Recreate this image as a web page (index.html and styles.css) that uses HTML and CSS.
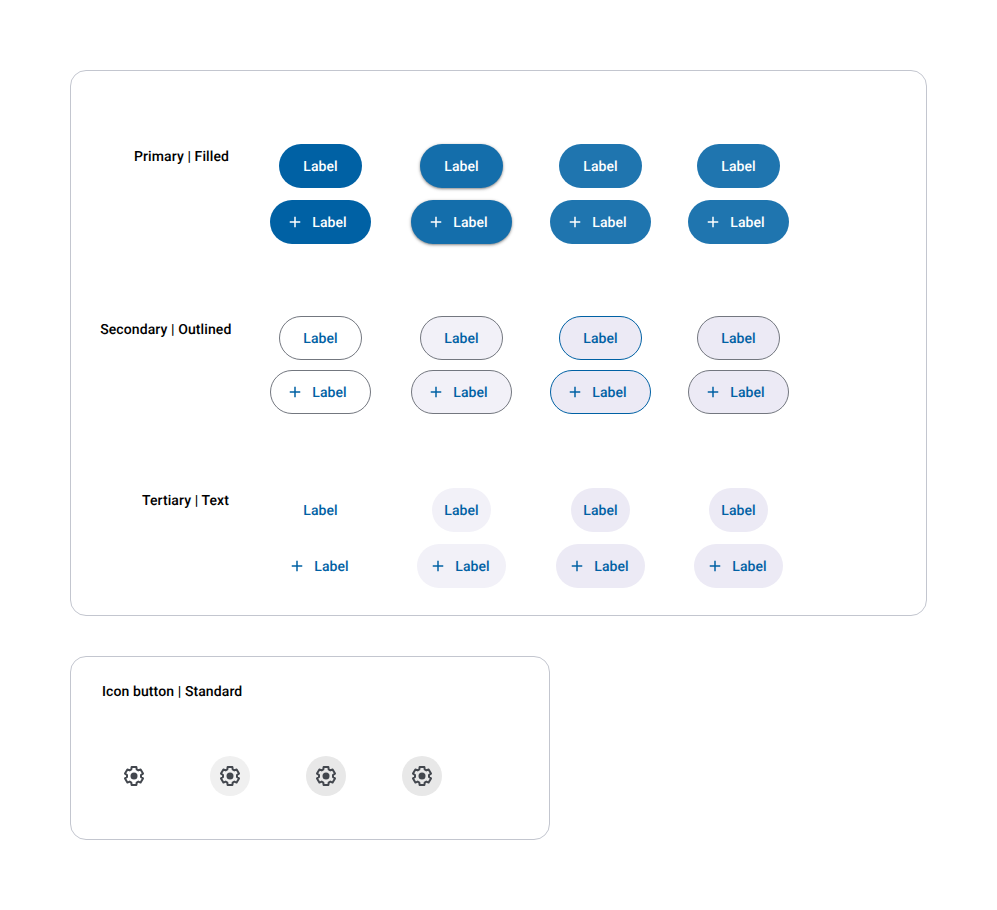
FILE: index.html
```html
<!DOCTYPE html>
<html lang="en">
<head>
<meta charset="utf-8">
<title>Buttons</title>
<link rel="stylesheet" href="styles.css">
</head>
<body>
<svg width="0" height="0" class="defs" aria-hidden="true">
  <symbol id="plus" viewBox="0 0 18 18"><path d="M14.25 9.75h-4.5v4.5h-1.5v-4.5h-4.5v-1.5h4.5v-4.5h1.5v4.5h4.5z"/></symbol>
  <symbol id="gear" viewBox="0 0 24 24"><path fill="none" stroke="currentColor" stroke-width="2" stroke-linejoin="round" d="M9.32 5.46 9.6 3H14.4L14.68 5.46 16.32 6.41 18.6 5.42 21 9.58 19 11.05V12.95L21 14.42 18.6 18.58 16.32 17.59 14.68 18.54 14.4 21H9.6L9.32 18.54 7.68 17.59 5.4 18.58 3 14.42 5 12.95V11.05L3 9.58 5.4 5.42 7.68 6.41z"/><circle cx="12" cy="12" r="3.5"/></symbol>
</svg>
<main class="page">
  <section class="card buttons">
    <div class="row filled">
      <h2 class="title">Primary | Filled</h2>
      <div class="states">
        <div class="pair"><button class="btn">Label</button><button class="btn with-icon"><svg><use href="#plus"/></svg>Label</button></div>
        <div class="pair hover"><button class="btn">Label</button><button class="btn with-icon"><svg><use href="#plus"/></svg>Label</button></div>
        <div class="pair focus"><button class="btn">Label</button><button class="btn with-icon"><svg><use href="#plus"/></svg>Label</button></div>
        <div class="pair pressed"><button class="btn">Label</button><button class="btn with-icon"><svg><use href="#plus"/></svg>Label</button></div>
      </div>
    </div>
    <div class="row outlined">
      <h2 class="title">Secondary | Outlined</h2>
      <div class="states">
        <div class="pair"><button class="btn">Label</button><button class="btn with-icon"><svg><use href="#plus"/></svg>Label</button></div>
        <div class="pair hover"><button class="btn">Label</button><button class="btn with-icon"><svg><use href="#plus"/></svg>Label</button></div>
        <div class="pair focus"><button class="btn">Label</button><button class="btn with-icon"><svg><use href="#plus"/></svg>Label</button></div>
        <div class="pair pressed"><button class="btn">Label</button><button class="btn with-icon"><svg><use href="#plus"/></svg>Label</button></div>
      </div>
    </div>
    <div class="row text">
      <h2 class="title">Tertiary | Text</h2>
      <div class="states">
        <div class="pair"><button class="btn">Label</button><button class="btn with-icon"><svg><use href="#plus"/></svg>Label</button></div>
        <div class="pair hover"><button class="btn">Label</button><button class="btn with-icon"><svg><use href="#plus"/></svg>Label</button></div>
        <div class="pair focus"><button class="btn">Label</button><button class="btn with-icon"><svg><use href="#plus"/></svg>Label</button></div>
        <div class="pair pressed"><button class="btn">Label</button><button class="btn with-icon"><svg><use href="#plus"/></svg>Label</button></div>
      </div>
    </div>
  </section>
  <section class="card icons">
    <h2 class="title">Icon button | Standard</h2>
    <div class="icon-row">
      <button class="icon-btn" aria-label="Settings"><svg><use href="#gear"/></svg></button>
      <button class="icon-btn hover" aria-label="Settings"><svg><use href="#gear"/></svg></button>
      <button class="icon-btn focus" aria-label="Settings"><svg><use href="#gear"/></svg></button>
      <button class="icon-btn pressed" aria-label="Settings"><svg><use href="#gear"/></svg></button>
    </div>
  </section>
</main>
</body>
</html>
```
FILE: styles.css
```css
* { box-sizing: border-box; }
body { margin: 0; background: #fff; font-family: Roboto, "Liberation Sans", sans-serif; text-rendering: geometricPrecision; }
.defs { display: block; }
.page { display: flex; flex-direction: column; gap: 40px; padding: 70px; }
.card { border: 1px solid #c3c6cf; border-radius: 16px; background: #fff; }
.title { margin: 0; font-size: 14px; line-height: 20px; font-weight: 500; letter-spacing: 0.1px; color: #000; white-space: nowrap; }

.buttons { height: 546px; padding: 73px 0 0; display: flex; flex-direction: column; gap: 72px; }
.row { display: grid; grid-template-columns: 158px auto; column-gap: 41px; height: 100px; align-items: start; }
.row .title { justify-self: end; margin-top: 3px; }
.row.outlined .title { margin: 4px -2.4px 0 0; }
.states { display: flex; }
.pair { display: flex; flex-direction: column; align-items: center; gap: 12px; width: 101px; margin-right: 38px; }
.pair:first-child { margin-right: 40px; }
.pair.focus { margin-right: 37px; }
.outlined .pair { gap: 10px; }

.btn { display: flex; align-items: center; justify-content: center; gap: 8px; width: 83px; height: 44px; flex: none; padding: 2px 0 0; border: 0; border-radius: 22px; background: none; color: #0061a4; font: 500 14px/20px Roboto, "Liberation Sans", sans-serif; letter-spacing: 0.1px; white-space: nowrap; text-rendering: inherit; }
.btn svg { width: 18px; height: 18px; margin-top: -2px; fill: currentColor; flex: none; }
.with-icon { width: 101px; padding: 2px 24px 0 16px; }

.filled .btn { background: #0061a4; color: #fff; }
.filled .hover .btn { background: #146eab; box-shadow: 0 1px 3px 1px rgba(0,0,0,.15), 0 1px 2px rgba(0,0,0,.3); }
.filled .focus .btn, .filled .pressed .btn { background: #1f75af; }

.outlined .btn { border: 1px solid #73777f; }
.outlined .with-icon { padding: 2px 23px 0 15px; }
.outlined .hover .btn, .text .hover .btn { background: #f2f1f8; }
.outlined .focus .btn, .outlined .pressed .btn, .text .focus .btn, .text .pressed .btn { background: #eceaf5; }
.outlined .focus .btn { border-color: #0061a4; }

.text .btn { width: 59px; }
.text .with-icon { width: 89px; padding: 2px 16px 0 12px; }

.icons { width: 480px; height: 184px; padding: 25px 31px 0; }
.icon-row { display: flex; gap: 56px; margin: 54px 0 0 12px; }
.icon-btn { display: flex; align-items: center; justify-content: center; width: 40px; height: 40px; padding: 0; border: 0; border-radius: 50%; background: none; color: #43474e; }
.icon-btn svg { width: 24px; height: 24px; fill: currentColor; }
.icon-btn.hover { background: #f0f0f0; }
.icon-btn.focus, .icon-btn.pressed { background: #e8e8e8; }
```
